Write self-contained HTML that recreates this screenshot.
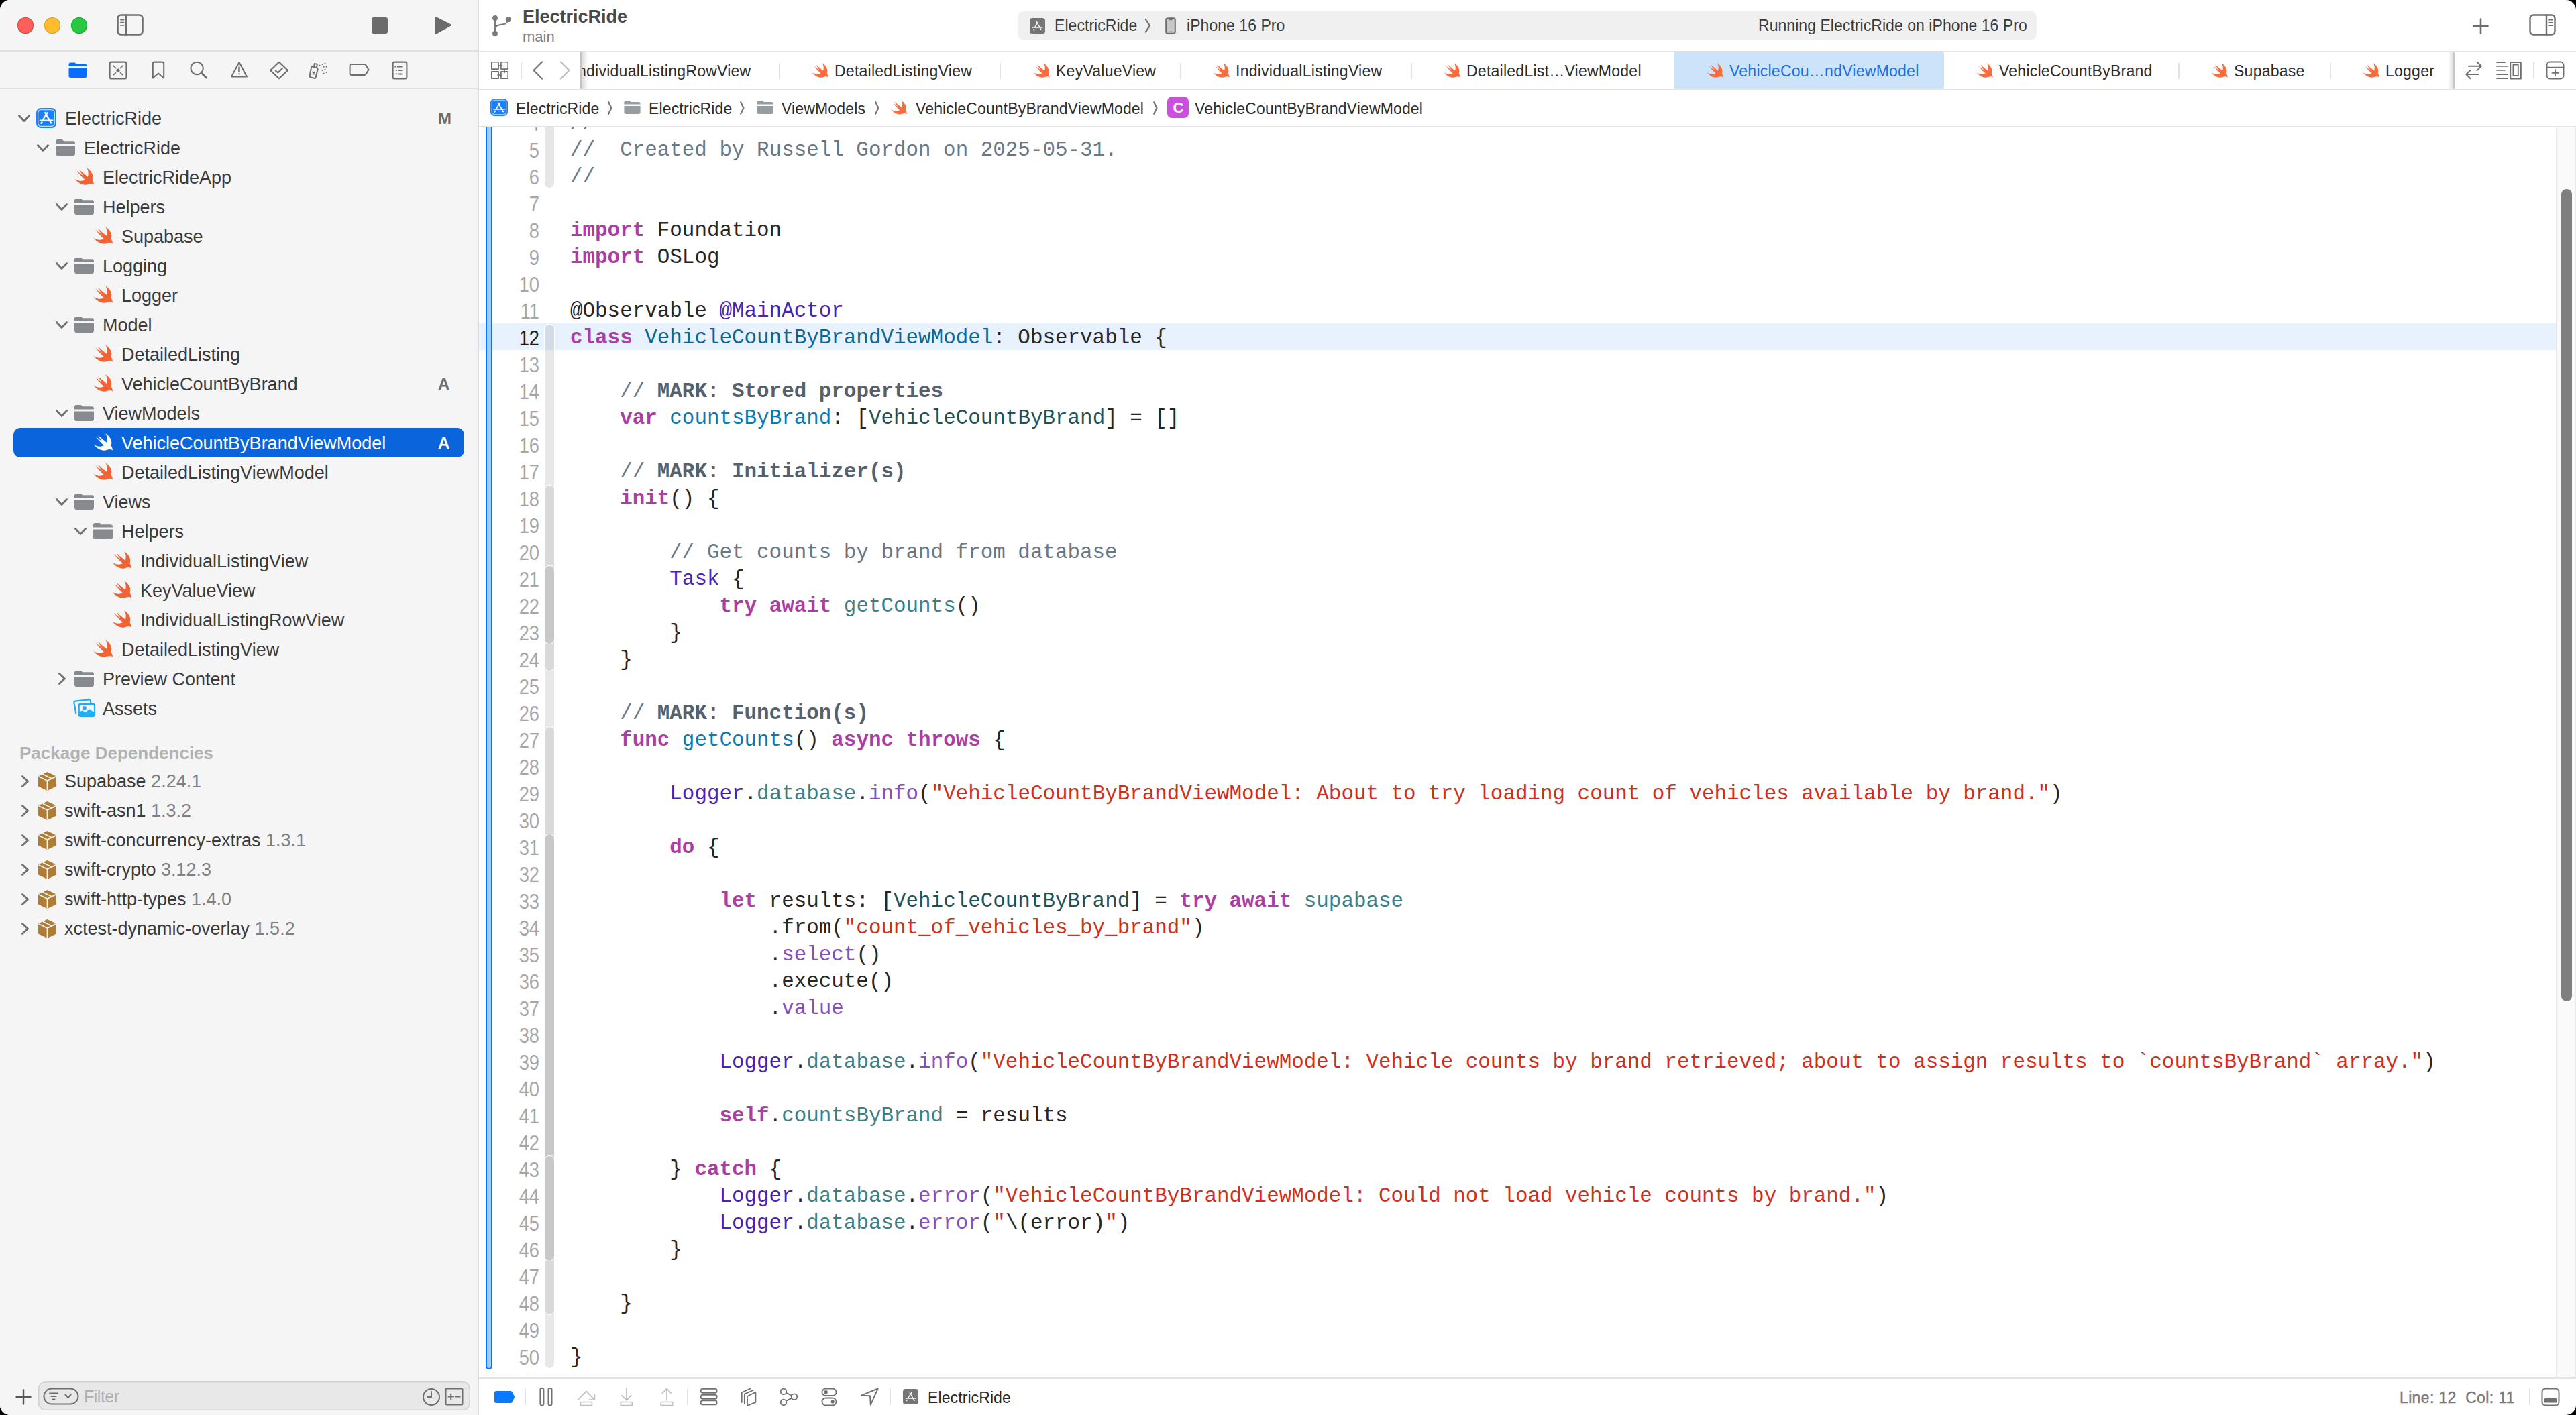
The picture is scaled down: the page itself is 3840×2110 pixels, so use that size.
<!DOCTYPE html><html><head><meta charset="utf-8"><style>
html,body{margin:0;padding:0;background:#000;width:3840px;height:2110px;overflow:hidden}
#win{position:absolute;left:0;top:0;width:3840px;height:2110px;border-radius:15px;overflow:hidden;background:#fff}
.code{position:absolute;left:850px;font-family:"Liberation Mono",monospace;font-size:30.9px;line-height:40px;white-space:pre;color:#262626}
.k{color:#ad3da4;font-weight:700}.c{color:#687887}.m{color:#55616d;font-weight:700}.s{color:#d12f1b}.td{color:#0c6691}.od{color:#0b79b4}.pc{color:#1f5257}.pf{color:#3c8087}.oc{color:#4a23b4}.of{color:#8450bf}.p{color:#262626}
.ln{position:absolute;left:703.5px;width:100px;text-align:right;font-family:"Liberation Sans",sans-serif;font-size:31px;line-height:40px;letter-spacing:0px;color:#a6a6a6;transform:scaleX(0.88);transform-origin:100% 50%}
</style></head><body><div id="win">
<div style="position:absolute;left:0px;top:0px;width:713px;height:2110px;background:#f5f5f5;"></div>
<div style="position:absolute;left:703px;top:0;width:10px;height:2110px;background:linear-gradient(to right,rgba(0,0,0,0),rgba(0,0,0,0.012))"></div>
<div style="position:absolute;left:713px;top:0px;width:1px;height:2110px;background:#dcdcdc;"></div>
<div style="position:absolute;left:0px;top:75px;width:712px;height:2px;background:#e0e0e0;"></div>
<div style="position:absolute;left:0px;top:131px;width:712px;height:2px;background:#e0e0e0;"></div>
<div style="position:absolute;left:26px;top:26px;width:24px;height:24px;border-radius:50%;background:#ff5f57;box-shadow:inset 0 0 0 1px #e14640"></div>
<div style="position:absolute;left:66px;top:26px;width:24px;height:24px;border-radius:50%;background:#febc2e;box-shadow:inset 0 0 0 1px #dfa023"></div>
<div style="position:absolute;left:106px;top:26px;width:24px;height:24px;border-radius:50%;background:#28c840;box-shadow:inset 0 0 0 1px #1aab29"></div>
<svg style="position:absolute;left:174px;top:21px" width="40" height="32" viewBox="0 0 40 32"><g stroke="#6e6e6e" stroke-width="2.6" fill="none" stroke-linecap="round" stroke-linejoin="round"><rect x="1.5" y="1.5" width="37" height="29" rx="5"/><path d="M14,1.5 V30.5"/><path d="M6,8.5 H10.5 M6,12.7 H10.5 M6,16.9 H10.5" stroke-width="1.8"/></g></svg>
<div style="position:absolute;left:554px;top:26px;width:24px;height:24px;background:#6b6b6b;border-radius:3px"></div>
<svg style="position:absolute;left:645px;top:23px" width="30" height="30" viewBox="0 0 30 30"><path d="M3,3.5 Q3,1 5.2,2.2 L27,13.2 Q29,14.5 27,15.8 L5.2,27.8 Q3,29 3,26.5 Z" fill="#6b6b6b"/></svg>
<svg style="position:absolute;left:102px;top:93px" width="28" height="24" viewBox="0 0 28 24"><path fill="#0a6cff" d="M3,0.5 H8.5 C10,0.5 10.6,1 11.4,2 L12,2.8 H25 C26.6,2.8 27.5,3.7 27.5,5.3 V6 H0.5 V3 C0.5,1.5 1.5,0.5 3,0.5 Z"/><path fill="#0a6cff" d="M0.5,8.3 H27.5 V20.5 C27.5,22.2 26.5,23 25,23 H3 C1.5,23 0.5,22.2 0.5,20.5 Z"/></svg>
<svg style="position:absolute;left:162px;top:91px" width="28" height="28" viewBox="0 0 28 28"><g stroke="#6e6e6e" stroke-width="2.1" fill="none" stroke-linecap="round" stroke-linejoin="round"><rect x="1.6" y="1.6" width="24.8" height="24.8" rx="2.5"/><path d="M7,7 L10.5,10.5 M21,7 L17.5,10.5 M7,21 L10.5,17.5 M21,21 L17.5,17.5" stroke-width="1.7"/><circle cx="14" cy="14" r="2.6" fill="#6e6e6e" stroke="none"/></g></svg>
<svg style="position:absolute;left:226px;top:91px" width="20" height="28" viewBox="0 0 20 28"><g stroke="#6e6e6e" stroke-width="2.1" fill="none" stroke-linecap="round" stroke-linejoin="round"><path d="M1.8,25.5 V4 Q1.8,1.6 4.2,1.6 H15.8 Q18.2,1.6 18.2,4 V25.5 L10,18.5 Z"/></g></svg>
<svg style="position:absolute;left:282px;top:91px" width="28" height="28" viewBox="0 0 28 28"><g stroke="#6e6e6e" stroke-width="2.1" fill="none" stroke-linecap="round" stroke-linejoin="round"><circle cx="11.6" cy="11" r="9.2"/><path d="M18.5,18 L25.5,25" stroke-width="2.8"/></g></svg>
<svg style="position:absolute;left:343px;top:91px" width="27" height="26" viewBox="0 0 27 26"><g stroke="#6e6e6e" stroke-width="2.0" fill="none" stroke-linecap="round" stroke-linejoin="round"><path d="M13.5,2 L25,23.5 H2 Z"/><path d="M13.5,9.5 V15.5" stroke-width="2.4"/><circle cx="13.5" cy="19.3" r="1.2" fill="#6e6e6e" stroke="none"/></g></svg>
<svg style="position:absolute;left:401px;top:91px" width="30" height="28" viewBox="0 0 30 28"><g stroke="#6e6e6e" stroke-width="2.1" fill="none" stroke-linecap="round" stroke-linejoin="round"><path d="M15,1.8 L28,14 L15,26.2 L2,14 Z"/><path d="M9.6,14.2 L13.3,17.6 L20,11" stroke-width="2.1"/></g></svg>
<svg style="position:absolute;left:460px;top:91px" width="33" height="28" viewBox="0 0 33 28"><g stroke="#6e6e6e" stroke-width="2.0" fill="none" stroke-linecap="round" stroke-linejoin="round"><path d="M5.5,8.2 L12.5,10.2 Q14,10.8 13.6,12.4 L10.6,24.8 Q10.2,26.3 8.7,25.9 L2.7,24.2 Q1.2,23.7 1.6,22.2 L4.1,9.6 Q4.5,8 5.5,8.2 Z"/><path d="M8,8.6 L8.9,3.9 L12.9,4.9 L11.9,9.6"/><path d="M5.8,16.5 L9.4,19.9 M9,16.3 L6.5,20.2" stroke-width="1.7"/><g fill="#6e6e6e" stroke="none"><circle cx="16.5" cy="6.8" r="1"/><circle cx="20.5" cy="5" r="1"/><circle cx="24.5" cy="3.4" r="1"/><circle cx="18.6" cy="10.5" r="1"/><circle cx="22.6" cy="8.8" r="1"/><circle cx="26.6" cy="8.8" r="1"/><circle cx="20.5" cy="14" r="1"/><circle cx="24.5" cy="12.8" r="1"/><circle cx="26.6" cy="17" r="1"/><circle cx="22.6" cy="18.6" r="1"/></g></g></svg>
<svg style="position:absolute;left:520px;top:94px" width="32" height="22" viewBox="0 0 32 22"><g stroke="#6e6e6e" stroke-width="2.1" fill="none" stroke-linecap="round" stroke-linejoin="round"><path d="M3.5,2 H23 Q24.5,2 25.4,3.3 L29.5,10 L25.4,16.7 Q24.5,18 23,18 H3.5 Q1.6,18 1.6,16 V4 Q1.6,2 3.5,2 Z"/></g></svg>
<svg style="position:absolute;left:584px;top:91px" width="24" height="28" viewBox="0 0 24 28"><g stroke="#6e6e6e" stroke-width="2.1" fill="none" stroke-linecap="round" stroke-linejoin="round"><rect x="1.6" y="1.6" width="20.8" height="24.8" rx="2.5"/><path d="M8.8,8.4 H15.8 M10.2,14 H15.8 M10.2,19.4 H15.8" stroke-width="2"/><g fill="#6e6e6e" stroke="none"><rect x="4.4" y="7.4" width="2" height="2"/><rect x="5.8" y="13" width="2" height="2"/><rect x="5.8" y="18.4" width="2" height="2"/></g></g></svg>
<div style="position:absolute;left:20px;top:638px;width:672px;height:44px;background:#0a64dc;border-radius:10px"></div>
<svg style="position:absolute;left:27px;top:171px" width="18" height="12" viewBox="0 0 18 12"><path d="M1.5,1.5 L9,9.5 L16.5,1.5" stroke="#707070" stroke-width="2.8" fill="none" stroke-linecap="round" stroke-linejoin="round"/></svg>
<svg style="position:absolute;left:54px;top:161px" width="30" height="30" viewBox="0 0 30 30"><rect x="0" y="0" width="30" height="30" rx="7" fill="#1a7ffa"/><rect x="2.6" y="2.6" width="24.8" height="24.8" rx="5" fill="none" stroke="#c2dcfd" stroke-width="1.3"/><g stroke="#fff" stroke-width="2.2" stroke-linecap="round" fill="none"><path d="M16.6,7.1 L10.4,17"/><path d="M13.2,7.1 L22.2,22.6"/><path d="M5.8,18.5 H24.5"/><path d="M7.4,22.8 L8.6,21.3"/></g></svg>
<div style="position:absolute;left:97px;top:164.14px;font-family:'Liberation Sans', sans-serif;font-size:27px;line-height:27px;color:#3b3b3b;font-weight:400;letter-spacing:0px;white-space:pre;">ElectricRide</div>
<div style="position:absolute;left:653px;top:164.68px;font-family:'Liberation Sans', sans-serif;font-size:24px;line-height:24px;color:#6e6e6e;font-weight:700;letter-spacing:0px;white-space:pre;">M</div>
<svg style="position:absolute;left:55px;top:215px" width="18" height="12" viewBox="0 0 18 12"><path d="M1.5,1.5 L9,9.5 L16.5,1.5" stroke="#707070" stroke-width="2.8" fill="none" stroke-linecap="round" stroke-linejoin="round"/></svg>
<svg style="position:absolute;left:83px;top:208px" width="29" height="24" viewBox="0 0 29 24"><path fill="#878b8f" d="M3,0 H8.5 C10,0 10.6,0.6 11.4,1.6 L12,2.3 H26 C27.7,2.3 29,3.6 29,5.3 V6.6 H0 V3 C0,1.3 1.3,0 3,0 Z"/><path fill="#878b8f" d="M0,9.6 H29 V21 C29,22.7 27.7,24 26,24 H3 C1.3,24 0,22.7 0,21 Z"/></svg>
<div style="position:absolute;left:125px;top:208.14px;font-family:'Liberation Sans', sans-serif;font-size:27px;line-height:27px;color:#3b3b3b;font-weight:400;letter-spacing:0px;white-space:pre;">ElectricRide</div>
<svg style="position:absolute;left:111px;top:250px" width="29" height="26" viewBox="0 0 29 26"><path fill="#f26333" d="M18.2,0.2 C23.5,3.5 27.6,8.5 27.3,14.4 C27.2,16 26.9,17.3 26.6,18.2 C27.9,20.2 28.9,23 28.9,25.8 C27.5,24 25,23.3 20.6,24.8 C15,27 7.5,25.5 0.2,16.6 C5.5,20.5 11.5,20.3 15.8,18.2 C11.5,14.5 6.5,9 3.4,4.3 C7.5,8.5 11,11 13.7,12.3 C11,9.5 8.5,6 7.2,2.9 C11.5,7 16,10.5 19.9,13.7 C21.2,9.5 21,4 18.2,0.2 Z"/></svg>
<div style="position:absolute;left:153px;top:252.14px;font-family:'Liberation Sans', sans-serif;font-size:27px;line-height:27px;color:#3b3b3b;font-weight:400;letter-spacing:0px;white-space:pre;">ElectricRideApp</div>
<svg style="position:absolute;left:83px;top:303px" width="18" height="12" viewBox="0 0 18 12"><path d="M1.5,1.5 L9,9.5 L16.5,1.5" stroke="#707070" stroke-width="2.8" fill="none" stroke-linecap="round" stroke-linejoin="round"/></svg>
<svg style="position:absolute;left:111px;top:296px" width="29" height="24" viewBox="0 0 29 24"><path fill="#878b8f" d="M3,0 H8.5 C10,0 10.6,0.6 11.4,1.6 L12,2.3 H26 C27.7,2.3 29,3.6 29,5.3 V6.6 H0 V3 C0,1.3 1.3,0 3,0 Z"/><path fill="#878b8f" d="M0,9.6 H29 V21 C29,22.7 27.7,24 26,24 H3 C1.3,24 0,22.7 0,21 Z"/></svg>
<div style="position:absolute;left:153px;top:296.14px;font-family:'Liberation Sans', sans-serif;font-size:27px;line-height:27px;color:#3b3b3b;font-weight:400;letter-spacing:0px;white-space:pre;">Helpers</div>
<svg style="position:absolute;left:139px;top:338px" width="29" height="26" viewBox="0 0 29 26"><path fill="#f26333" d="M18.2,0.2 C23.5,3.5 27.6,8.5 27.3,14.4 C27.2,16 26.9,17.3 26.6,18.2 C27.9,20.2 28.9,23 28.9,25.8 C27.5,24 25,23.3 20.6,24.8 C15,27 7.5,25.5 0.2,16.6 C5.5,20.5 11.5,20.3 15.8,18.2 C11.5,14.5 6.5,9 3.4,4.3 C7.5,8.5 11,11 13.7,12.3 C11,9.5 8.5,6 7.2,2.9 C11.5,7 16,10.5 19.9,13.7 C21.2,9.5 21,4 18.2,0.2 Z"/></svg>
<div style="position:absolute;left:181px;top:340.14px;font-family:'Liberation Sans', sans-serif;font-size:27px;line-height:27px;color:#3b3b3b;font-weight:400;letter-spacing:0px;white-space:pre;">Supabase</div>
<svg style="position:absolute;left:83px;top:391px" width="18" height="12" viewBox="0 0 18 12"><path d="M1.5,1.5 L9,9.5 L16.5,1.5" stroke="#707070" stroke-width="2.8" fill="none" stroke-linecap="round" stroke-linejoin="round"/></svg>
<svg style="position:absolute;left:111px;top:384px" width="29" height="24" viewBox="0 0 29 24"><path fill="#878b8f" d="M3,0 H8.5 C10,0 10.6,0.6 11.4,1.6 L12,2.3 H26 C27.7,2.3 29,3.6 29,5.3 V6.6 H0 V3 C0,1.3 1.3,0 3,0 Z"/><path fill="#878b8f" d="M0,9.6 H29 V21 C29,22.7 27.7,24 26,24 H3 C1.3,24 0,22.7 0,21 Z"/></svg>
<div style="position:absolute;left:153px;top:384.14px;font-family:'Liberation Sans', sans-serif;font-size:27px;line-height:27px;color:#3b3b3b;font-weight:400;letter-spacing:0px;white-space:pre;">Logging</div>
<svg style="position:absolute;left:139px;top:426px" width="29" height="26" viewBox="0 0 29 26"><path fill="#f26333" d="M18.2,0.2 C23.5,3.5 27.6,8.5 27.3,14.4 C27.2,16 26.9,17.3 26.6,18.2 C27.9,20.2 28.9,23 28.9,25.8 C27.5,24 25,23.3 20.6,24.8 C15,27 7.5,25.5 0.2,16.6 C5.5,20.5 11.5,20.3 15.8,18.2 C11.5,14.5 6.5,9 3.4,4.3 C7.5,8.5 11,11 13.7,12.3 C11,9.5 8.5,6 7.2,2.9 C11.5,7 16,10.5 19.9,13.7 C21.2,9.5 21,4 18.2,0.2 Z"/></svg>
<div style="position:absolute;left:181px;top:428.14px;font-family:'Liberation Sans', sans-serif;font-size:27px;line-height:27px;color:#3b3b3b;font-weight:400;letter-spacing:0px;white-space:pre;">Logger</div>
<svg style="position:absolute;left:83px;top:479px" width="18" height="12" viewBox="0 0 18 12"><path d="M1.5,1.5 L9,9.5 L16.5,1.5" stroke="#707070" stroke-width="2.8" fill="none" stroke-linecap="round" stroke-linejoin="round"/></svg>
<svg style="position:absolute;left:111px;top:472px" width="29" height="24" viewBox="0 0 29 24"><path fill="#878b8f" d="M3,0 H8.5 C10,0 10.6,0.6 11.4,1.6 L12,2.3 H26 C27.7,2.3 29,3.6 29,5.3 V6.6 H0 V3 C0,1.3 1.3,0 3,0 Z"/><path fill="#878b8f" d="M0,9.6 H29 V21 C29,22.7 27.7,24 26,24 H3 C1.3,24 0,22.7 0,21 Z"/></svg>
<div style="position:absolute;left:153px;top:472.14px;font-family:'Liberation Sans', sans-serif;font-size:27px;line-height:27px;color:#3b3b3b;font-weight:400;letter-spacing:0px;white-space:pre;">Model</div>
<svg style="position:absolute;left:139px;top:514px" width="29" height="26" viewBox="0 0 29 26"><path fill="#f26333" d="M18.2,0.2 C23.5,3.5 27.6,8.5 27.3,14.4 C27.2,16 26.9,17.3 26.6,18.2 C27.9,20.2 28.9,23 28.9,25.8 C27.5,24 25,23.3 20.6,24.8 C15,27 7.5,25.5 0.2,16.6 C5.5,20.5 11.5,20.3 15.8,18.2 C11.5,14.5 6.5,9 3.4,4.3 C7.5,8.5 11,11 13.7,12.3 C11,9.5 8.5,6 7.2,2.9 C11.5,7 16,10.5 19.9,13.7 C21.2,9.5 21,4 18.2,0.2 Z"/></svg>
<div style="position:absolute;left:181px;top:516.14px;font-family:'Liberation Sans', sans-serif;font-size:27px;line-height:27px;color:#3b3b3b;font-weight:400;letter-spacing:0px;white-space:pre;">DetailedListing</div>
<svg style="position:absolute;left:139px;top:558px" width="29" height="26" viewBox="0 0 29 26"><path fill="#f26333" d="M18.2,0.2 C23.5,3.5 27.6,8.5 27.3,14.4 C27.2,16 26.9,17.3 26.6,18.2 C27.9,20.2 28.9,23 28.9,25.8 C27.5,24 25,23.3 20.6,24.8 C15,27 7.5,25.5 0.2,16.6 C5.5,20.5 11.5,20.3 15.8,18.2 C11.5,14.5 6.5,9 3.4,4.3 C7.5,8.5 11,11 13.7,12.3 C11,9.5 8.5,6 7.2,2.9 C11.5,7 16,10.5 19.9,13.7 C21.2,9.5 21,4 18.2,0.2 Z"/></svg>
<div style="position:absolute;left:181px;top:560.14px;font-family:'Liberation Sans', sans-serif;font-size:27px;line-height:27px;color:#3b3b3b;font-weight:400;letter-spacing:0px;white-space:pre;">VehicleCountByBrand</div>
<div style="position:absolute;left:653px;top:560.68px;font-family:'Liberation Sans', sans-serif;font-size:24px;line-height:24px;color:#6e6e6e;font-weight:700;letter-spacing:0px;white-space:pre;">A</div>
<svg style="position:absolute;left:83px;top:611px" width="18" height="12" viewBox="0 0 18 12"><path d="M1.5,1.5 L9,9.5 L16.5,1.5" stroke="#707070" stroke-width="2.8" fill="none" stroke-linecap="round" stroke-linejoin="round"/></svg>
<svg style="position:absolute;left:111px;top:604px" width="29" height="24" viewBox="0 0 29 24"><path fill="#878b8f" d="M3,0 H8.5 C10,0 10.6,0.6 11.4,1.6 L12,2.3 H26 C27.7,2.3 29,3.6 29,5.3 V6.6 H0 V3 C0,1.3 1.3,0 3,0 Z"/><path fill="#878b8f" d="M0,9.6 H29 V21 C29,22.7 27.7,24 26,24 H3 C1.3,24 0,22.7 0,21 Z"/></svg>
<div style="position:absolute;left:153px;top:604.14px;font-family:'Liberation Sans', sans-serif;font-size:27px;line-height:27px;color:#3b3b3b;font-weight:400;letter-spacing:0px;white-space:pre;">ViewModels</div>
<svg style="position:absolute;left:139px;top:646px" width="29" height="26" viewBox="0 0 29 26"><path fill="#ffffff" d="M18.2,0.2 C23.5,3.5 27.6,8.5 27.3,14.4 C27.2,16 26.9,17.3 26.6,18.2 C27.9,20.2 28.9,23 28.9,25.8 C27.5,24 25,23.3 20.6,24.8 C15,27 7.5,25.5 0.2,16.6 C5.5,20.5 11.5,20.3 15.8,18.2 C11.5,14.5 6.5,9 3.4,4.3 C7.5,8.5 11,11 13.7,12.3 C11,9.5 8.5,6 7.2,2.9 C11.5,7 16,10.5 19.9,13.7 C21.2,9.5 21,4 18.2,0.2 Z"/></svg>
<div style="position:absolute;left:181px;top:648.14px;font-family:'Liberation Sans', sans-serif;font-size:27px;line-height:27px;color:#ffffff;font-weight:400;letter-spacing:0px;white-space:pre;">VehicleCountByBrandViewModel</div>
<div style="position:absolute;left:653px;top:648.68px;font-family:'Liberation Sans', sans-serif;font-size:24px;line-height:24px;color:#ffffff;font-weight:700;letter-spacing:0px;white-space:pre;">A</div>
<svg style="position:absolute;left:139px;top:690px" width="29" height="26" viewBox="0 0 29 26"><path fill="#f26333" d="M18.2,0.2 C23.5,3.5 27.6,8.5 27.3,14.4 C27.2,16 26.9,17.3 26.6,18.2 C27.9,20.2 28.9,23 28.9,25.8 C27.5,24 25,23.3 20.6,24.8 C15,27 7.5,25.5 0.2,16.6 C5.5,20.5 11.5,20.3 15.8,18.2 C11.5,14.5 6.5,9 3.4,4.3 C7.5,8.5 11,11 13.7,12.3 C11,9.5 8.5,6 7.2,2.9 C11.5,7 16,10.5 19.9,13.7 C21.2,9.5 21,4 18.2,0.2 Z"/></svg>
<div style="position:absolute;left:181px;top:692.14px;font-family:'Liberation Sans', sans-serif;font-size:27px;line-height:27px;color:#3b3b3b;font-weight:400;letter-spacing:0px;white-space:pre;">DetailedListingViewModel</div>
<svg style="position:absolute;left:83px;top:743px" width="18" height="12" viewBox="0 0 18 12"><path d="M1.5,1.5 L9,9.5 L16.5,1.5" stroke="#707070" stroke-width="2.8" fill="none" stroke-linecap="round" stroke-linejoin="round"/></svg>
<svg style="position:absolute;left:111px;top:736px" width="29" height="24" viewBox="0 0 29 24"><path fill="#878b8f" d="M3,0 H8.5 C10,0 10.6,0.6 11.4,1.6 L12,2.3 H26 C27.7,2.3 29,3.6 29,5.3 V6.6 H0 V3 C0,1.3 1.3,0 3,0 Z"/><path fill="#878b8f" d="M0,9.6 H29 V21 C29,22.7 27.7,24 26,24 H3 C1.3,24 0,22.7 0,21 Z"/></svg>
<div style="position:absolute;left:153px;top:736.14px;font-family:'Liberation Sans', sans-serif;font-size:27px;line-height:27px;color:#3b3b3b;font-weight:400;letter-spacing:0px;white-space:pre;">Views</div>
<svg style="position:absolute;left:111px;top:787px" width="18" height="12" viewBox="0 0 18 12"><path d="M1.5,1.5 L9,9.5 L16.5,1.5" stroke="#707070" stroke-width="2.8" fill="none" stroke-linecap="round" stroke-linejoin="round"/></svg>
<svg style="position:absolute;left:139px;top:780px" width="29" height="24" viewBox="0 0 29 24"><path fill="#878b8f" d="M3,0 H8.5 C10,0 10.6,0.6 11.4,1.6 L12,2.3 H26 C27.7,2.3 29,3.6 29,5.3 V6.6 H0 V3 C0,1.3 1.3,0 3,0 Z"/><path fill="#878b8f" d="M0,9.6 H29 V21 C29,22.7 27.7,24 26,24 H3 C1.3,24 0,22.7 0,21 Z"/></svg>
<div style="position:absolute;left:181px;top:780.14px;font-family:'Liberation Sans', sans-serif;font-size:27px;line-height:27px;color:#3b3b3b;font-weight:400;letter-spacing:0px;white-space:pre;">Helpers</div>
<svg style="position:absolute;left:167px;top:822px" width="29" height="26" viewBox="0 0 29 26"><path fill="#f26333" d="M18.2,0.2 C23.5,3.5 27.6,8.5 27.3,14.4 C27.2,16 26.9,17.3 26.6,18.2 C27.9,20.2 28.9,23 28.9,25.8 C27.5,24 25,23.3 20.6,24.8 C15,27 7.5,25.5 0.2,16.6 C5.5,20.5 11.5,20.3 15.8,18.2 C11.5,14.5 6.5,9 3.4,4.3 C7.5,8.5 11,11 13.7,12.3 C11,9.5 8.5,6 7.2,2.9 C11.5,7 16,10.5 19.9,13.7 C21.2,9.5 21,4 18.2,0.2 Z"/></svg>
<div style="position:absolute;left:209px;top:824.14px;font-family:'Liberation Sans', sans-serif;font-size:27px;line-height:27px;color:#3b3b3b;font-weight:400;letter-spacing:0px;white-space:pre;">IndividualListingView</div>
<svg style="position:absolute;left:167px;top:866px" width="29" height="26" viewBox="0 0 29 26"><path fill="#f26333" d="M18.2,0.2 C23.5,3.5 27.6,8.5 27.3,14.4 C27.2,16 26.9,17.3 26.6,18.2 C27.9,20.2 28.9,23 28.9,25.8 C27.5,24 25,23.3 20.6,24.8 C15,27 7.5,25.5 0.2,16.6 C5.5,20.5 11.5,20.3 15.8,18.2 C11.5,14.5 6.5,9 3.4,4.3 C7.5,8.5 11,11 13.7,12.3 C11,9.5 8.5,6 7.2,2.9 C11.5,7 16,10.5 19.9,13.7 C21.2,9.5 21,4 18.2,0.2 Z"/></svg>
<div style="position:absolute;left:209px;top:868.14px;font-family:'Liberation Sans', sans-serif;font-size:27px;line-height:27px;color:#3b3b3b;font-weight:400;letter-spacing:0px;white-space:pre;">KeyValueView</div>
<svg style="position:absolute;left:167px;top:910px" width="29" height="26" viewBox="0 0 29 26"><path fill="#f26333" d="M18.2,0.2 C23.5,3.5 27.6,8.5 27.3,14.4 C27.2,16 26.9,17.3 26.6,18.2 C27.9,20.2 28.9,23 28.9,25.8 C27.5,24 25,23.3 20.6,24.8 C15,27 7.5,25.5 0.2,16.6 C5.5,20.5 11.5,20.3 15.8,18.2 C11.5,14.5 6.5,9 3.4,4.3 C7.5,8.5 11,11 13.7,12.3 C11,9.5 8.5,6 7.2,2.9 C11.5,7 16,10.5 19.9,13.7 C21.2,9.5 21,4 18.2,0.2 Z"/></svg>
<div style="position:absolute;left:209px;top:912.14px;font-family:'Liberation Sans', sans-serif;font-size:27px;line-height:27px;color:#3b3b3b;font-weight:400;letter-spacing:0px;white-space:pre;">IndividualListingRowView</div>
<svg style="position:absolute;left:139px;top:954px" width="29" height="26" viewBox="0 0 29 26"><path fill="#f26333" d="M18.2,0.2 C23.5,3.5 27.6,8.5 27.3,14.4 C27.2,16 26.9,17.3 26.6,18.2 C27.9,20.2 28.9,23 28.9,25.8 C27.5,24 25,23.3 20.6,24.8 C15,27 7.5,25.5 0.2,16.6 C5.5,20.5 11.5,20.3 15.8,18.2 C11.5,14.5 6.5,9 3.4,4.3 C7.5,8.5 11,11 13.7,12.3 C11,9.5 8.5,6 7.2,2.9 C11.5,7 16,10.5 19.9,13.7 C21.2,9.5 21,4 18.2,0.2 Z"/></svg>
<div style="position:absolute;left:181px;top:956.14px;font-family:'Liberation Sans', sans-serif;font-size:27px;line-height:27px;color:#3b3b3b;font-weight:400;letter-spacing:0px;white-space:pre;">DetailedListingView</div>
<svg style="position:absolute;left:87px;top:1003px" width="12" height="18" viewBox="0 0 12 18"><path d="M1.5,1.5 L9.5,9 L1.5,16.5" stroke="#707070" stroke-width="2.8" fill="none" stroke-linecap="round" stroke-linejoin="round"/></svg>
<svg style="position:absolute;left:111px;top:1000px" width="29" height="24" viewBox="0 0 29 24"><path fill="#878b8f" d="M3,0 H8.5 C10,0 10.6,0.6 11.4,1.6 L12,2.3 H26 C27.7,2.3 29,3.6 29,5.3 V6.6 H0 V3 C0,1.3 1.3,0 3,0 Z"/><path fill="#878b8f" d="M0,9.6 H29 V21 C29,22.7 27.7,24 26,24 H3 C1.3,24 0,22.7 0,21 Z"/></svg>
<div style="position:absolute;left:153px;top:1000.14px;font-family:'Liberation Sans', sans-serif;font-size:27px;line-height:27px;color:#3b3b3b;font-weight:400;letter-spacing:0px;white-space:pre;">Preview Content</div>
<svg style="position:absolute;left:108px;top:1041px" width="36" height="30" viewBox="0 0 36 30"><path d="M5.3,22.8 L2.4,7 Q2.1,5 4.1,4.6 L24.6,2.3 Q26.4,2.1 26.8,4 L27.4,8" stroke="#1eaef5" stroke-width="2.3" fill="none" stroke-linejoin="round"/><rect x="9.65" y="8.75" width="23.4" height="18" rx="2.6" fill="#f5f5f5" stroke="#1eaef5" stroke-width="2.3"/><path d="M9.65,20.5 L15.1,18.6 L18.8,21.4 L25.3,16.4 L33,21.4 V24.2 Q33,26.75 30.4,26.75 H12.2 Q9.65,26.75 9.65,24.2 Z" fill="#1eaef5"/><circle cx="17.9" cy="14.9" r="2.9" fill="#1eaef5"/></svg>
<div style="position:absolute;left:153px;top:1044.14px;font-family:'Liberation Sans', sans-serif;font-size:27px;line-height:27px;color:#3b3b3b;font-weight:400;letter-spacing:0px;white-space:pre;">Assets</div>
<div style="position:absolute;left:29px;top:1110.49px;font-family:'Liberation Sans', sans-serif;font-size:26px;line-height:26px;color:#b2b2b2;font-weight:700;letter-spacing:0px;white-space:pre;">Package Dependencies</div>
<svg style="position:absolute;left:32px;top:1156px" width="12" height="18" viewBox="0 0 12 18"><path d="M1.5,1.5 L9.5,9 L1.5,16.5" stroke="#707070" stroke-width="2.8" fill="none" stroke-linecap="round" stroke-linejoin="round"/></svg>
<svg style="position:absolute;left:57px;top:1151px" width="27" height="28" viewBox="0 0 27 28"><path fill="#b07c34" d="M13.5,0 L27,6.5 V21.5 L13.5,28 L0,21.5 V6.5 Z"/><path d="M0.5,6.8 L13.5,13 L26.5,6.8 M13.5,13 V27.5" stroke="#f5f5f5" stroke-width="1.8" fill="none"/><path d="M6.5,3.3 L20,9.8" stroke="#f5f5f5" stroke-width="1.8" fill="none"/></svg>
<div style="position:absolute;left:96px;top:1148px;font-family:'Liberation Sans', sans-serif;font-size:27px;line-height:34px;white-space:pre;color:#3b3b3b">Supabase <span style="color:#808080">2.24.1</span></div>
<svg style="position:absolute;left:32px;top:1200px" width="12" height="18" viewBox="0 0 12 18"><path d="M1.5,1.5 L9.5,9 L1.5,16.5" stroke="#707070" stroke-width="2.8" fill="none" stroke-linecap="round" stroke-linejoin="round"/></svg>
<svg style="position:absolute;left:57px;top:1195px" width="27" height="28" viewBox="0 0 27 28"><path fill="#b07c34" d="M13.5,0 L27,6.5 V21.5 L13.5,28 L0,21.5 V6.5 Z"/><path d="M0.5,6.8 L13.5,13 L26.5,6.8 M13.5,13 V27.5" stroke="#f5f5f5" stroke-width="1.8" fill="none"/><path d="M6.5,3.3 L20,9.8" stroke="#f5f5f5" stroke-width="1.8" fill="none"/></svg>
<div style="position:absolute;left:96px;top:1192px;font-family:'Liberation Sans', sans-serif;font-size:27px;line-height:34px;white-space:pre;color:#3b3b3b">swift-asn1 <span style="color:#808080">1.3.2</span></div>
<svg style="position:absolute;left:32px;top:1244px" width="12" height="18" viewBox="0 0 12 18"><path d="M1.5,1.5 L9.5,9 L1.5,16.5" stroke="#707070" stroke-width="2.8" fill="none" stroke-linecap="round" stroke-linejoin="round"/></svg>
<svg style="position:absolute;left:57px;top:1239px" width="27" height="28" viewBox="0 0 27 28"><path fill="#b07c34" d="M13.5,0 L27,6.5 V21.5 L13.5,28 L0,21.5 V6.5 Z"/><path d="M0.5,6.8 L13.5,13 L26.5,6.8 M13.5,13 V27.5" stroke="#f5f5f5" stroke-width="1.8" fill="none"/><path d="M6.5,3.3 L20,9.8" stroke="#f5f5f5" stroke-width="1.8" fill="none"/></svg>
<div style="position:absolute;left:96px;top:1236px;font-family:'Liberation Sans', sans-serif;font-size:27px;line-height:34px;white-space:pre;color:#3b3b3b">swift-concurrency-extras <span style="color:#808080">1.3.1</span></div>
<svg style="position:absolute;left:32px;top:1288px" width="12" height="18" viewBox="0 0 12 18"><path d="M1.5,1.5 L9.5,9 L1.5,16.5" stroke="#707070" stroke-width="2.8" fill="none" stroke-linecap="round" stroke-linejoin="round"/></svg>
<svg style="position:absolute;left:57px;top:1283px" width="27" height="28" viewBox="0 0 27 28"><path fill="#b07c34" d="M13.5,0 L27,6.5 V21.5 L13.5,28 L0,21.5 V6.5 Z"/><path d="M0.5,6.8 L13.5,13 L26.5,6.8 M13.5,13 V27.5" stroke="#f5f5f5" stroke-width="1.8" fill="none"/><path d="M6.5,3.3 L20,9.8" stroke="#f5f5f5" stroke-width="1.8" fill="none"/></svg>
<div style="position:absolute;left:96px;top:1280px;font-family:'Liberation Sans', sans-serif;font-size:27px;line-height:34px;white-space:pre;color:#3b3b3b">swift-crypto <span style="color:#808080">3.12.3</span></div>
<svg style="position:absolute;left:32px;top:1332px" width="12" height="18" viewBox="0 0 12 18"><path d="M1.5,1.5 L9.5,9 L1.5,16.5" stroke="#707070" stroke-width="2.8" fill="none" stroke-linecap="round" stroke-linejoin="round"/></svg>
<svg style="position:absolute;left:57px;top:1327px" width="27" height="28" viewBox="0 0 27 28"><path fill="#b07c34" d="M13.5,0 L27,6.5 V21.5 L13.5,28 L0,21.5 V6.5 Z"/><path d="M0.5,6.8 L13.5,13 L26.5,6.8 M13.5,13 V27.5" stroke="#f5f5f5" stroke-width="1.8" fill="none"/><path d="M6.5,3.3 L20,9.8" stroke="#f5f5f5" stroke-width="1.8" fill="none"/></svg>
<div style="position:absolute;left:96px;top:1324px;font-family:'Liberation Sans', sans-serif;font-size:27px;line-height:34px;white-space:pre;color:#3b3b3b">swift-http-types <span style="color:#808080">1.4.0</span></div>
<svg style="position:absolute;left:32px;top:1376px" width="12" height="18" viewBox="0 0 12 18"><path d="M1.5,1.5 L9.5,9 L1.5,16.5" stroke="#707070" stroke-width="2.8" fill="none" stroke-linecap="round" stroke-linejoin="round"/></svg>
<svg style="position:absolute;left:57px;top:1371px" width="27" height="28" viewBox="0 0 27 28"><path fill="#b07c34" d="M13.5,0 L27,6.5 V21.5 L13.5,28 L0,21.5 V6.5 Z"/><path d="M0.5,6.8 L13.5,13 L26.5,6.8 M13.5,13 V27.5" stroke="#f5f5f5" stroke-width="1.8" fill="none"/><path d="M6.5,3.3 L20,9.8" stroke="#f5f5f5" stroke-width="1.8" fill="none"/></svg>
<div style="position:absolute;left:96px;top:1368px;font-family:'Liberation Sans', sans-serif;font-size:27px;line-height:34px;white-space:pre;color:#3b3b3b">xctest-dynamic-overlay <span style="color:#808080">1.5.2</span></div>
<svg style="position:absolute;left:22px;top:2070px" width="26" height="26" viewBox="0 0 26 26"><g stroke="#555" stroke-width="2.4" fill="none" stroke-linecap="round" stroke-linejoin="round"><path d="M13,2.5 V23.5 M2.5,13 H23.5"/></g></svg>
<div style="position:absolute;left:57px;top:2060px;width:644px;height:43px;border-radius:11px;background:#e8e8e8;box-shadow:inset 0 0 0 1.5px #d2d2d2"></div>
<svg style="position:absolute;left:64px;top:2069px" width="54" height="26" viewBox="0 0 54 26"><g stroke="#6e6e6e" stroke-width="2" fill="none" stroke-linecap="round" stroke-linejoin="round"><rect x="1.5" y="1.5" width="51" height="23" rx="11.5"/><path d="M10,8.5 H22 M12.5,13 H19.5 M14.5,17.5 H17.5" stroke-width="2"/><path d="M33.5,10.8 L37.5,14.8 L41.5,10.8" stroke-width="2.2"/></g></svg>
<div style="position:absolute;left:125px;top:2069.84px;font-family:'Liberation Sans', sans-serif;font-size:25px;line-height:25px;color:#b0b0b0;font-weight:400;letter-spacing:-0.5px;white-space:pre;">Filter</div>
<svg style="position:absolute;left:629px;top:2069px" width="28" height="28" viewBox="0 0 28 28"><g stroke="#6e6e6e" stroke-width="2" fill="none" stroke-linecap="round" stroke-linejoin="round"><circle cx="14" cy="14" r="12"/><path d="M14,6 V14 H8.5" stroke-width="2"/></g></svg>
<svg style="position:absolute;left:663px;top:2069px" width="28" height="27" viewBox="0 0 28 27"><g stroke="#6e6e6e" stroke-width="2" fill="none" stroke-linecap="round" stroke-linejoin="round"><rect x="1.5" y="1.5" width="25" height="24" rx="1.5"/><path d="M5.5,13.5 H13 M9.2,9.7 V17.3 M16,13.5 H22.5" stroke-width="2"/></g></svg>
<div style="position:absolute;left:714px;top:76px;width:3126px;height:2px;background:#e3e3e3;"></div>
<div style="position:absolute;left:714px;top:132px;width:3126px;height:2px;background:#e3e3e3;"></div>
<div style="position:absolute;left:714px;top:188px;width:3126px;height:2px;background:#e3e3e3;"></div>
<div style="position:absolute;left:714px;top:2054px;width:3126px;height:2px;background:#e3e3e3;"></div>
<svg style="position:absolute;left:730px;top:20px" width="34" height="38" viewBox="0 0 34 38"><g fill="#7a7a7a"><circle cx="8" cy="7" r="3.9"/><circle cx="27.7" cy="9.2" r="3.9"/><circle cx="8" cy="30" r="3.9"/></g><path d="M8,7 V30 M8,21.5 Q9.5,17.5 17,16.8 Q25,16 26,12.5 L27.2,9.5" stroke="#7a7a7a" stroke-width="2.2" fill="none"/></svg>
<div style="position:absolute;left:779px;top:12.14px;font-family:'Liberation Sans', sans-serif;font-size:27px;line-height:27px;color:#4a4a4a;font-weight:700;letter-spacing:0px;white-space:pre;">ElectricRide</div>
<div style="position:absolute;left:779px;top:44.38px;font-family:'Liberation Sans', sans-serif;font-size:22px;line-height:22px;color:#808080;font-weight:400;letter-spacing:0px;white-space:pre;">main</div>
<div style="position:absolute;left:1517px;top:16px;width:1519px;height:44px;border-radius:10px;background:#f0f0f0"></div>
<svg style="position:absolute;left:1535px;top:27px" width="23" height="23" viewBox="0 0 30 30"><rect x="0" y="0" width="30" height="30" rx="5" fill="#767676"/><g stroke="#fff" stroke-width="1.686666666666667" stroke-linecap="round" fill="none"><path d="M16.6,7.1 L10.4,17"/><path d="M13.2,7.1 L22.2,22.6"/><path d="M5.8,18.5 H24.5"/><path d="M7.4,22.8 L8.6,21.3"/></g></svg>
<div style="position:absolute;left:1572px;top:26.53px;font-family:'Liberation Sans', sans-serif;font-size:23px;line-height:23px;color:#3a3a3a;font-weight:400;letter-spacing:0.05px;white-space:pre;">ElectricRide</div>
<svg style="position:absolute;left:1704px;top:27px" width="14" height="22" viewBox="0 0 14 22"><g stroke="#707070" stroke-width="2.2" fill="none" stroke-linecap="round" stroke-linejoin="round"><path d="M3.8,2 L10,11.3 L3.8,20.6"/></g></svg>
<svg style="position:absolute;left:1737px;top:26px" width="16" height="25" viewBox="0 0 16 25"><g stroke="#6e6e6e" stroke-width="2" fill="none" stroke-linecap="round" stroke-linejoin="round"><rect x="1.2" y="1.2" width="13.6" height="22.6" rx="2.5" fill="#c8c8c8"/><path d="M6,3.6 H10 M6,21.4 H10" stroke-width="1.2"/></g></svg>
<div style="position:absolute;left:1769px;top:26.53px;font-family:'Liberation Sans', sans-serif;font-size:23px;line-height:23px;color:#3a3a3a;font-weight:400;letter-spacing:0.05px;white-space:pre;">iPhone 16 Pro</div>
<div style="position:absolute;left:2621px;top:26.53px;font-family:'Liberation Sans', sans-serif;font-size:23px;line-height:23px;color:#3a3a3a;font-weight:400;letter-spacing:0.05px;white-space:pre;">Running ElectricRide on iPhone 16 Pro</div>
<svg style="position:absolute;left:3686px;top:27px" width="24" height="24" viewBox="0 0 24 24"><g stroke="#6e6e6e" stroke-width="2.6" fill="none" stroke-linecap="round" stroke-linejoin="round"><path d="M12,1.5 V22.5 M1.5,12 H22.5"/></g></svg>
<svg style="position:absolute;left:3770px;top:21px" width="40" height="32" viewBox="0 0 40 32"><g stroke="#6e6e6e" stroke-width="2.4" fill="none" stroke-linecap="round" stroke-linejoin="round"><rect x="1.5" y="1.5" width="37" height="29" rx="5"/><path d="M26,1.5 V30.5"/><path d="M30,8.5 H35 M30,12.8 H35 M30,17.1 H35" stroke-width="1.8"/></g></svg>
<svg style="position:absolute;left:731px;top:91px" width="28" height="28" viewBox="0 0 28 28"><g stroke="#707070" stroke-width="1.6" fill="none" stroke-linecap="round" stroke-linejoin="round"><rect x="1.8" y="1.8" width="10.3" height="10.3"/><rect x="15.9" y="1.8" width="10.3" height="10.3"/><rect x="1.8" y="15.9" width="10.3" height="10.3"/><rect x="15.9" y="15.9" width="10.3" height="10.3"/><path d="M12.1,7 H17.7 M21,12.1 V17.5 M10.8,21 H15.9"/></g></svg>
<div style="position:absolute;left:776px;top:93px;width:2px;height:24px;background:#e2e2e2;"></div>
<svg style="position:absolute;left:792px;top:90px" width="20" height="30" viewBox="0 0 20 30"><g stroke="#777" stroke-width="2.3" fill="none" stroke-linecap="round" stroke-linejoin="round"><path d="M16,2.5 L3.5,15 L16,27.5"/></g></svg>
<svg style="position:absolute;left:832px;top:90px" width="20" height="30" viewBox="0 0 20 30"><g stroke="#bdbdbd" stroke-width="2.3" fill="none" stroke-linecap="round" stroke-linejoin="round"><path d="M4,2.5 L16.5,15 L4,27.5"/></g></svg>
<div style="position:absolute;left:867px;top:78px;width:2792px;height:54px;overflow:hidden">
<div style="position:absolute;left:1629px;top:0px;width:402px;height:54px;background:#cde3fa"></div>
<div style="position:absolute;left:-6px;top:16.53px;font-family:'Liberation Sans', sans-serif;font-size:23px;line-height:23px;color:#2b2b2b;font-weight:400;letter-spacing:0.25px;white-space:pre;">ndividualListingRowView</div>
<div style="position:absolute;left:294px;top:16px;width:2px;height:24px;background:#e2e2e2;"></div>
<svg style="position:absolute;left:343px;top:16px" width="25" height="22" viewBox="0 0 29 26"><path fill="#fa6b3d" d="M18.2,0.2 C23.5,3.5 27.6,8.5 27.3,14.4 C27.2,16 26.9,17.3 26.6,18.2 C27.9,20.2 28.9,23 28.9,25.8 C27.5,24 25,23.3 20.6,24.8 C15,27 7.5,25.5 0.2,16.6 C5.5,20.5 11.5,20.3 15.8,18.2 C11.5,14.5 6.5,9 3.4,4.3 C7.5,8.5 11,11 13.7,12.3 C11,9.5 8.5,6 7.2,2.9 C11.5,7 16,10.5 19.9,13.7 C21.2,9.5 21,4 18.2,0.2 Z"/></svg>
<div style="position:absolute;left:377px;top:16.53px;font-family:'Liberation Sans', sans-serif;font-size:23px;line-height:23px;color:#2b2b2b;font-weight:400;letter-spacing:0.25px;white-space:pre;">DetailedListingView</div>
<div style="position:absolute;left:623px;top:16px;width:2px;height:24px;background:#e2e2e2;"></div>
<svg style="position:absolute;left:673px;top:16px" width="25" height="22" viewBox="0 0 29 26"><path fill="#fa6b3d" d="M18.2,0.2 C23.5,3.5 27.6,8.5 27.3,14.4 C27.2,16 26.9,17.3 26.6,18.2 C27.9,20.2 28.9,23 28.9,25.8 C27.5,24 25,23.3 20.6,24.8 C15,27 7.5,25.5 0.2,16.6 C5.5,20.5 11.5,20.3 15.8,18.2 C11.5,14.5 6.5,9 3.4,4.3 C7.5,8.5 11,11 13.7,12.3 C11,9.5 8.5,6 7.2,2.9 C11.5,7 16,10.5 19.9,13.7 C21.2,9.5 21,4 18.2,0.2 Z"/></svg>
<div style="position:absolute;left:707px;top:16.53px;font-family:'Liberation Sans', sans-serif;font-size:23px;line-height:23px;color:#2b2b2b;font-weight:400;letter-spacing:0.25px;white-space:pre;">KeyValueView</div>
<div style="position:absolute;left:891.5px;top:16px;width:2px;height:24px;background:#e2e2e2;"></div>
<svg style="position:absolute;left:941px;top:16px" width="25" height="22" viewBox="0 0 29 26"><path fill="#fa6b3d" d="M18.2,0.2 C23.5,3.5 27.6,8.5 27.3,14.4 C27.2,16 26.9,17.3 26.6,18.2 C27.9,20.2 28.9,23 28.9,25.8 C27.5,24 25,23.3 20.6,24.8 C15,27 7.5,25.5 0.2,16.6 C5.5,20.5 11.5,20.3 15.8,18.2 C11.5,14.5 6.5,9 3.4,4.3 C7.5,8.5 11,11 13.7,12.3 C11,9.5 8.5,6 7.2,2.9 C11.5,7 16,10.5 19.9,13.7 C21.2,9.5 21,4 18.2,0.2 Z"/></svg>
<div style="position:absolute;left:975px;top:16.53px;font-family:'Liberation Sans', sans-serif;font-size:23px;line-height:23px;color:#2b2b2b;font-weight:400;letter-spacing:0.25px;white-space:pre;">IndividualListingView</div>
<div style="position:absolute;left:1236px;top:16px;width:2px;height:24px;background:#e2e2e2;"></div>
<svg style="position:absolute;left:1285px;top:16px" width="25" height="22" viewBox="0 0 29 26"><path fill="#fa6b3d" d="M18.2,0.2 C23.5,3.5 27.6,8.5 27.3,14.4 C27.2,16 26.9,17.3 26.6,18.2 C27.9,20.2 28.9,23 28.9,25.8 C27.5,24 25,23.3 20.6,24.8 C15,27 7.5,25.5 0.2,16.6 C5.5,20.5 11.5,20.3 15.8,18.2 C11.5,14.5 6.5,9 3.4,4.3 C7.5,8.5 11,11 13.7,12.3 C11,9.5 8.5,6 7.2,2.9 C11.5,7 16,10.5 19.9,13.7 C21.2,9.5 21,4 18.2,0.2 Z"/></svg>
<div style="position:absolute;left:1319px;top:16.53px;font-family:'Liberation Sans', sans-serif;font-size:23px;line-height:23px;color:#2b2b2b;font-weight:400;letter-spacing:0.25px;white-space:pre;">DetailedList…ViewModel</div>
<svg style="position:absolute;left:1677px;top:16px" width="25" height="22" viewBox="0 0 29 26"><path fill="#fa6b3d" d="M18.2,0.2 C23.5,3.5 27.6,8.5 27.3,14.4 C27.2,16 26.9,17.3 26.6,18.2 C27.9,20.2 28.9,23 28.9,25.8 C27.5,24 25,23.3 20.6,24.8 C15,27 7.5,25.5 0.2,16.6 C5.5,20.5 11.5,20.3 15.8,18.2 C11.5,14.5 6.5,9 3.4,4.3 C7.5,8.5 11,11 13.7,12.3 C11,9.5 8.5,6 7.2,2.9 C11.5,7 16,10.5 19.9,13.7 C21.2,9.5 21,4 18.2,0.2 Z"/></svg>
<div style="position:absolute;left:1711px;top:16.53px;font-family:'Liberation Sans', sans-serif;font-size:23px;line-height:23px;color:#1a6fe0;font-weight:400;letter-spacing:0.25px;white-space:pre;">VehicleCou…ndViewModel</div>
<svg style="position:absolute;left:2079px;top:16px" width="25" height="22" viewBox="0 0 29 26"><path fill="#fa6b3d" d="M18.2,0.2 C23.5,3.5 27.6,8.5 27.3,14.4 C27.2,16 26.9,17.3 26.6,18.2 C27.9,20.2 28.9,23 28.9,25.8 C27.5,24 25,23.3 20.6,24.8 C15,27 7.5,25.5 0.2,16.6 C5.5,20.5 11.5,20.3 15.8,18.2 C11.5,14.5 6.5,9 3.4,4.3 C7.5,8.5 11,11 13.7,12.3 C11,9.5 8.5,6 7.2,2.9 C11.5,7 16,10.5 19.9,13.7 C21.2,9.5 21,4 18.2,0.2 Z"/></svg>
<div style="position:absolute;left:2113px;top:16.53px;font-family:'Liberation Sans', sans-serif;font-size:23px;line-height:23px;color:#2b2b2b;font-weight:400;letter-spacing:0.25px;white-space:pre;">VehicleCountByBrand</div>
<div style="position:absolute;left:2380px;top:16px;width:2px;height:24px;background:#e2e2e2;"></div>
<svg style="position:absolute;left:2429px;top:16px" width="25" height="22" viewBox="0 0 29 26"><path fill="#fa6b3d" d="M18.2,0.2 C23.5,3.5 27.6,8.5 27.3,14.4 C27.2,16 26.9,17.3 26.6,18.2 C27.9,20.2 28.9,23 28.9,25.8 C27.5,24 25,23.3 20.6,24.8 C15,27 7.5,25.5 0.2,16.6 C5.5,20.5 11.5,20.3 15.8,18.2 C11.5,14.5 6.5,9 3.4,4.3 C7.5,8.5 11,11 13.7,12.3 C11,9.5 8.5,6 7.2,2.9 C11.5,7 16,10.5 19.9,13.7 C21.2,9.5 21,4 18.2,0.2 Z"/></svg>
<div style="position:absolute;left:2463px;top:16.53px;font-family:'Liberation Sans', sans-serif;font-size:23px;line-height:23px;color:#2b2b2b;font-weight:400;letter-spacing:0.25px;white-space:pre;">Supabase</div>
<div style="position:absolute;left:2606px;top:16px;width:2px;height:24px;background:#e2e2e2;"></div>
<svg style="position:absolute;left:2655px;top:16px" width="25" height="22" viewBox="0 0 29 26"><path fill="#fa6b3d" d="M18.2,0.2 C23.5,3.5 27.6,8.5 27.3,14.4 C27.2,16 26.9,17.3 26.6,18.2 C27.9,20.2 28.9,23 28.9,25.8 C27.5,24 25,23.3 20.6,24.8 C15,27 7.5,25.5 0.2,16.6 C5.5,20.5 11.5,20.3 15.8,18.2 C11.5,14.5 6.5,9 3.4,4.3 C7.5,8.5 11,11 13.7,12.3 C11,9.5 8.5,6 7.2,2.9 C11.5,7 16,10.5 19.9,13.7 C21.2,9.5 21,4 18.2,0.2 Z"/></svg>
<div style="position:absolute;left:2689px;top:16.53px;font-family:'Liberation Sans', sans-serif;font-size:23px;line-height:23px;color:#2b2b2b;font-weight:400;letter-spacing:0.25px;white-space:pre;">Logger</div>
</div>
<div style="position:absolute;left:865px;top:78px;width:2px;height:54px;background:#c4c4c4;"></div>
<div style="position:absolute;left:867px;top:78px;width:10px;height:54px;background:linear-gradient(to left,rgba(0,0,0,0),rgba(0,0,0,0.14))"></div>
<div style="position:absolute;left:3649px;top:78px;width:10px;height:54px;background:linear-gradient(to right,rgba(0,0,0,0),rgba(0,0,0,0.16))"></div>
<div style="position:absolute;left:3658px;top:78px;width:182px;height:54px;background:#fff;"></div>
<div style="position:absolute;left:3657px;top:78px;width:2px;height:54px;background:#c8c8c8;"></div>
<svg style="position:absolute;left:3674px;top:90px" width="28" height="30" viewBox="0 0 28 30"><g stroke="#707070" stroke-width="2.0" fill="none" stroke-linecap="round" stroke-linejoin="round"><path d="M6,8.8 H24.5 M18.5,2.5 L24.8,8.8 L18.5,15.1 M2.5,21 H21 M8.5,14.7 L2.2,21 L8.5,27.3"/></g></svg>
<svg style="position:absolute;left:3720px;top:91px" width="40" height="28" viewBox="0 0 40 28"><g stroke="#707070" stroke-width="1.8" fill="none" stroke-linecap="round" stroke-linejoin="round"><path d="M2,2 H14 M2,7.9 H18 M2,13.8 H14 M2,20 H18 M2,26 H18"/><rect x="22.3" y="2" width="15.6" height="24.6"/><rect x="26.4" y="5.7" width="7.4" height="16.3"/></g></svg>
<div style="position:absolute;left:3776px;top:93px;width:2px;height:24px;background:#e2e2e2;"></div>
<svg style="position:absolute;left:3795px;top:91px" width="28" height="28" viewBox="0 0 28 28"><g stroke="#707070" stroke-width="1.9" fill="none" stroke-linecap="round" stroke-linejoin="round"><rect x="1.5" y="1.5" width="25" height="25" rx="5"/><path d="M1.5,9.8 H26.5 M14,13 V21.5 M9.5,17.8 H18.5"/></g></svg>
<svg style="position:absolute;left:731px;top:147px" width="26" height="26" viewBox="0 0 30 30"><rect x="0" y="0" width="30" height="30" rx="7" fill="#1a7ffa"/><rect x="2.6" y="2.6" width="24.8" height="24.8" rx="5" fill="none" stroke="#c2dcfd" stroke-width="1.3"/><g stroke="#fff" stroke-width="1.906666666666667" stroke-linecap="round" fill="none"><path d="M16.6,7.1 L10.4,17"/><path d="M13.2,7.1 L22.2,22.6"/><path d="M5.8,18.5 H24.5"/><path d="M7.4,22.8 L8.6,21.3"/></g></svg>
<div style="position:absolute;left:769px;top:151.03px;font-family:'Liberation Sans', sans-serif;font-size:23px;line-height:23px;color:#2b2b2b;font-weight:400;letter-spacing:0.15px;white-space:pre;">ElectricRide</div>
<svg style="position:absolute;left:903px;top:150px" width="12" height="22" viewBox="0 0 12 22"><g stroke="#787878" stroke-width="2.3" fill="none" stroke-linecap="round" stroke-linejoin="round"><path d="M4.2,2.3 L8.4,11 L4.2,19.8"/></g></svg>
<svg style="position:absolute;left:930px;top:150px" width="25" height="20" viewBox="0 0 29 24"><path fill="#979ca1" d="M3,0 H8.5 C10,0 10.6,0.6 11.4,1.6 L12,2.3 H26 C27.7,2.3 29,3.6 29,5.3 V6.6 H0 V3 C0,1.3 1.3,0 3,0 Z"/><path fill="#979ca1" d="M0,9.6 H29 V21 C29,22.7 27.7,24 26,24 H3 C1.3,24 0,22.7 0,21 Z"/></svg>
<div style="position:absolute;left:967px;top:151.03px;font-family:'Liberation Sans', sans-serif;font-size:23px;line-height:23px;color:#2b2b2b;font-weight:400;letter-spacing:0.15px;white-space:pre;">ElectricRide</div>
<svg style="position:absolute;left:1100px;top:150px" width="12" height="22" viewBox="0 0 12 22"><g stroke="#787878" stroke-width="2.3" fill="none" stroke-linecap="round" stroke-linejoin="round"><path d="M4.2,2.3 L8.4,11 L4.2,19.8"/></g></svg>
<svg style="position:absolute;left:1128px;top:150px" width="25" height="20" viewBox="0 0 29 24"><path fill="#979ca1" d="M3,0 H8.5 C10,0 10.6,0.6 11.4,1.6 L12,2.3 H26 C27.7,2.3 29,3.6 29,5.3 V6.6 H0 V3 C0,1.3 1.3,0 3,0 Z"/><path fill="#979ca1" d="M0,9.6 H29 V21 C29,22.7 27.7,24 26,24 H3 C1.3,24 0,22.7 0,21 Z"/></svg>
<div style="position:absolute;left:1165px;top:151.03px;font-family:'Liberation Sans', sans-serif;font-size:23px;line-height:23px;color:#2b2b2b;font-weight:400;letter-spacing:0.15px;white-space:pre;">ViewModels</div>
<svg style="position:absolute;left:1301px;top:150px" width="12" height="22" viewBox="0 0 12 22"><g stroke="#787878" stroke-width="2.3" fill="none" stroke-linecap="round" stroke-linejoin="round"><path d="M4.2,2.3 L8.4,11 L4.2,19.8"/></g></svg>
<svg style="position:absolute;left:1328px;top:149px" width="24" height="22" viewBox="0 0 29 26"><path fill="#fa6b3d" d="M18.2,0.2 C23.5,3.5 27.6,8.5 27.3,14.4 C27.2,16 26.9,17.3 26.6,18.2 C27.9,20.2 28.9,23 28.9,25.8 C27.5,24 25,23.3 20.6,24.8 C15,27 7.5,25.5 0.2,16.6 C5.5,20.5 11.5,20.3 15.8,18.2 C11.5,14.5 6.5,9 3.4,4.3 C7.5,8.5 11,11 13.7,12.3 C11,9.5 8.5,6 7.2,2.9 C11.5,7 16,10.5 19.9,13.7 C21.2,9.5 21,4 18.2,0.2 Z"/></svg>
<div style="position:absolute;left:1365px;top:151.03px;font-family:'Liberation Sans', sans-serif;font-size:23px;line-height:23px;color:#2b2b2b;font-weight:400;letter-spacing:0.15px;white-space:pre;">VehicleCountByBrandViewModel</div>
<svg style="position:absolute;left:1716px;top:150px" width="12" height="22" viewBox="0 0 12 22"><g stroke="#787878" stroke-width="2.3" fill="none" stroke-linecap="round" stroke-linejoin="round"><path d="M4.2,2.3 L8.4,11 L4.2,19.8"/></g></svg>
<div style="position:absolute;left:1740px;top:144px;width:32px;height:32px;border-radius:7px;background:#ca50db"></div>
<div style="position:absolute;left:1748.5px;top:149.88px;font-family:'Liberation Sans', sans-serif;font-size:22px;line-height:22px;color:#ffffff;font-weight:700;letter-spacing:0px;white-space:pre;">C</div>
<div style="position:absolute;left:1781px;top:151.03px;font-family:'Liberation Sans', sans-serif;font-size:23px;line-height:23px;color:#2b2b2b;font-weight:400;letter-spacing:0.15px;white-space:pre;">VehicleCountByBrandViewModel</div>
<div style="position:absolute;left:714px;top:190px;width:3126px;height:1864px;overflow:hidden">
<div style="position:absolute;left:-714px;top:-190px;width:3840px;height:2110px">
<div style="position:absolute;left:714px;top:482px;width:3096px;height:40px;background:#e8f2ff;"></div>
<div style="position:absolute;left:812px;top:44px;width:14px;height:236px;background:#e6e6e6;border-radius:7px;box-shadow:0 0 0 1px #fff"></div>
<div style="position:absolute;left:812px;top:484px;width:14px;height:1556px;background:#e8e8e8;border-radius:7px;box-shadow:0 0 0 1px #fff"></div>
<div style="position:absolute;left:812px;top:724px;width:14px;height:276px;background:#d9d9d9;border-radius:7px;box-shadow:0 0 0 1px #fff"></div>
<div style="position:absolute;left:812px;top:1084px;width:14px;height:876px;background:#d9d9d9;border-radius:7px;box-shadow:0 0 0 1px #fff"></div>
<div style="position:absolute;left:812px;top:844px;width:14px;height:116px;background:#c8c8c8;border-radius:7px;box-shadow:0 0 0 1px #fff"></div>
<div style="position:absolute;left:812px;top:1244px;width:14px;height:516px;background:#c8c8c8;border-radius:7px;box-shadow:0 0 0 1px #fff"></div>
<div style="position:absolute;left:812px;top:1724px;width:14px;height:156px;background:#c8c8c8;border-radius:7px;box-shadow:0 0 0 1px #fff"></div>
<div style="position:absolute;left:812px;top:484px;width:14px;height:38px;background:#d3dbe6;border-radius:7px 7px 0 0"></div>
<div style="position:absolute;left:724px;top:150px;width:10px;height:1892px;border-radius:0 0 5px 5px;background:#9ecaff;box-shadow:inset 0 0 0 2px #0077ff"></div>
<div class="code" style="top:164px"><span class="c">//</span></div>
<div class="ln" style="top:165px;color:#a6a6a6">4</div>
<div class="code" style="top:204px"><span class="c">//  Created by Russell Gordon on 2025-05-31.</span></div>
<div class="ln" style="top:205px;color:#a6a6a6">5</div>
<div class="code" style="top:244px"><span class="c">//</span></div>
<div class="ln" style="top:245px;color:#a6a6a6">6</div>
<div class="code" style="top:284px"></div>
<div class="ln" style="top:285px;color:#a6a6a6">7</div>
<div class="code" style="top:324px"><span class="k">import</span><span class="p"> Foundation</span></div>
<div class="ln" style="top:325px;color:#a6a6a6">8</div>
<div class="code" style="top:364px"><span class="k">import</span><span class="p"> OSLog</span></div>
<div class="ln" style="top:365px;color:#a6a6a6">9</div>
<div class="code" style="top:404px"></div>
<div class="ln" style="top:405px;color:#a6a6a6">10</div>
<div class="code" style="top:444px"><span class="p">@Observable </span><span class="oc">@MainActor</span></div>
<div class="ln" style="top:445px;color:#a6a6a6">11</div>
<div class="code" style="top:484px"><span class="k">class</span><span class="p"> </span><span class="td">VehicleCountByBrandViewModel</span><span class="p">: Observable {</span></div>
<div class="ln" style="top:485px;color:#1a1a1a">12</div>
<div class="code" style="top:524px"></div>
<div class="ln" style="top:525px;color:#a6a6a6">13</div>
<div class="code" style="top:564px"><span class="p">    </span><span class="c">// </span><span class="m">MARK: Stored properties</span></div>
<div class="ln" style="top:565px;color:#a6a6a6">14</div>
<div class="code" style="top:604px"><span class="p">    </span><span class="k">var</span><span class="p"> </span><span class="od">countsByBrand</span><span class="p">: [</span><span class="pc">VehicleCountByBrand</span><span class="p">] = []</span></div>
<div class="ln" style="top:605px;color:#a6a6a6">15</div>
<div class="code" style="top:644px"></div>
<div class="ln" style="top:645px;color:#a6a6a6">16</div>
<div class="code" style="top:684px"><span class="p">    </span><span class="c">// </span><span class="m">MARK: Initializer(s)</span></div>
<div class="ln" style="top:685px;color:#a6a6a6">17</div>
<div class="code" style="top:724px"><span class="p">    </span><span class="k">init</span><span class="p">() {</span></div>
<div class="ln" style="top:725px;color:#a6a6a6">18</div>
<div class="code" style="top:764px"></div>
<div class="ln" style="top:765px;color:#a6a6a6">19</div>
<div class="code" style="top:804px"><span class="p">        </span><span class="c">// Get counts by brand from database</span></div>
<div class="ln" style="top:805px;color:#a6a6a6">20</div>
<div class="code" style="top:844px"><span class="p">        </span><span class="oc">Task</span><span class="p"> {</span></div>
<div class="ln" style="top:845px;color:#a6a6a6">21</div>
<div class="code" style="top:884px"><span class="p">            </span><span class="k">try</span><span class="p"> </span><span class="k">await</span><span class="p"> </span><span class="pf">getCounts</span><span class="p">()</span></div>
<div class="ln" style="top:885px;color:#a6a6a6">22</div>
<div class="code" style="top:924px"><span class="p">        }</span></div>
<div class="ln" style="top:925px;color:#a6a6a6">23</div>
<div class="code" style="top:964px"><span class="p">    }</span></div>
<div class="ln" style="top:965px;color:#a6a6a6">24</div>
<div class="code" style="top:1004px"></div>
<div class="ln" style="top:1005px;color:#a6a6a6">25</div>
<div class="code" style="top:1044px"><span class="p">    </span><span class="c">// </span><span class="m">MARK: Function(s)</span></div>
<div class="ln" style="top:1045px;color:#a6a6a6">26</div>
<div class="code" style="top:1084px"><span class="p">    </span><span class="k">func</span><span class="p"> </span><span class="od">getCounts</span><span class="p">() </span><span class="k">async</span><span class="p"> </span><span class="k">throws</span><span class="p"> {</span></div>
<div class="ln" style="top:1085px;color:#a6a6a6">27</div>
<div class="code" style="top:1124px"></div>
<div class="ln" style="top:1125px;color:#a6a6a6">28</div>
<div class="code" style="top:1164px"><span class="p">        </span><span class="oc">Logger</span><span class="p">.</span><span class="pf">database</span><span class="p">.</span><span class="of">info</span><span class="p">(</span><span class="s">&quot;VehicleCountByBrandViewModel: About to try loading count of vehicles available by brand.&quot;</span><span class="p">)</span></div>
<div class="ln" style="top:1165px;color:#a6a6a6">29</div>
<div class="code" style="top:1204px"></div>
<div class="ln" style="top:1205px;color:#a6a6a6">30</div>
<div class="code" style="top:1244px"><span class="p">        </span><span class="k">do</span><span class="p"> {</span></div>
<div class="ln" style="top:1245px;color:#a6a6a6">31</div>
<div class="code" style="top:1284px"></div>
<div class="ln" style="top:1285px;color:#a6a6a6">32</div>
<div class="code" style="top:1324px"><span class="p">            </span><span class="k">let</span><span class="p"> results: [</span><span class="pc">VehicleCountByBrand</span><span class="p">] = </span><span class="k">try</span><span class="p"> </span><span class="k">await</span><span class="p"> </span><span class="pf">supabase</span></div>
<div class="ln" style="top:1325px;color:#a6a6a6">33</div>
<div class="code" style="top:1364px"><span class="p">                .from(</span><span class="s">&quot;count_of_vehicles_by_brand&quot;</span><span class="p">)</span></div>
<div class="ln" style="top:1365px;color:#a6a6a6">34</div>
<div class="code" style="top:1404px"><span class="p">                .</span><span class="of">select</span><span class="p">()</span></div>
<div class="ln" style="top:1405px;color:#a6a6a6">35</div>
<div class="code" style="top:1444px"><span class="p">                .execute()</span></div>
<div class="ln" style="top:1445px;color:#a6a6a6">36</div>
<div class="code" style="top:1484px"><span class="p">                .</span><span class="of">value</span></div>
<div class="ln" style="top:1485px;color:#a6a6a6">37</div>
<div class="code" style="top:1524px"></div>
<div class="ln" style="top:1525px;color:#a6a6a6">38</div>
<div class="code" style="top:1564px"><span class="p">            </span><span class="oc">Logger</span><span class="p">.</span><span class="pf">database</span><span class="p">.</span><span class="of">info</span><span class="p">(</span><span class="s">&quot;VehicleCountByBrandViewModel: Vehicle counts by brand retrieved; about to assign results to `countsByBrand` array.&quot;</span><span class="p">)</span></div>
<div class="ln" style="top:1565px;color:#a6a6a6">39</div>
<div class="code" style="top:1604px"></div>
<div class="ln" style="top:1605px;color:#a6a6a6">40</div>
<div class="code" style="top:1644px"><span class="p">            </span><span class="k">self</span><span class="p">.</span><span class="pf">countsByBrand</span><span class="p"> = results</span></div>
<div class="ln" style="top:1645px;color:#a6a6a6">41</div>
<div class="code" style="top:1684px"></div>
<div class="ln" style="top:1685px;color:#a6a6a6">42</div>
<div class="code" style="top:1724px"><span class="p">        } </span><span class="k">catch</span><span class="p"> {</span></div>
<div class="ln" style="top:1725px;color:#a6a6a6">43</div>
<div class="code" style="top:1764px"><span class="p">            </span><span class="oc">Logger</span><span class="p">.</span><span class="pf">database</span><span class="p">.</span><span class="of">error</span><span class="p">(</span><span class="s">&quot;VehicleCountByBrandViewModel: Could not load vehicle counts by brand.&quot;</span><span class="p">)</span></div>
<div class="ln" style="top:1765px;color:#a6a6a6">44</div>
<div class="code" style="top:1804px"><span class="p">            </span><span class="oc">Logger</span><span class="p">.</span><span class="pf">database</span><span class="p">.</span><span class="of">error</span><span class="p">(</span><span class="s">&quot;</span><span class="p">\(error)</span><span class="s">&quot;</span><span class="p">)</span></div>
<div class="ln" style="top:1805px;color:#a6a6a6">45</div>
<div class="code" style="top:1844px"><span class="p">        }</span></div>
<div class="ln" style="top:1845px;color:#a6a6a6">46</div>
<div class="code" style="top:1884px"></div>
<div class="ln" style="top:1885px;color:#a6a6a6">47</div>
<div class="code" style="top:1924px"><span class="p">    }</span></div>
<div class="ln" style="top:1925px;color:#a6a6a6">48</div>
<div class="code" style="top:1964px"></div>
<div class="ln" style="top:1965px;color:#a6a6a6">49</div>
<div class="code" style="top:2004px"><span class="p">}</span></div>
<div class="ln" style="top:2005px;color:#a6a6a6">50</div>
<div class="code" style="top:2044px"></div>
<div class="ln" style="top:2045px;color:#a6a6a6">51</div>
</div></div>
<div style="position:absolute;left:3810px;top:190px;width:30px;height:1863px;background:#fafafa;"></div>
<div style="position:absolute;left:3810px;top:190px;width:2px;height:1863px;background:#e8e8e8;"></div>
<div style="position:absolute;left:3818px;top:282px;width:16px;height:1211px;background:#7f7f7f;border-radius:8px"></div>
<div style="position:absolute;left:3838px;top:190px;width:2px;height:1863px;background:#ececec;"></div>
<svg style="position:absolute;left:737px;top:2074px" width="30" height="18" viewBox="0 0 30 18"><path d="M3,0 H23.5 Q25.5,0 26.6,1.6 L29.6,7.6 Q30.3,9 29.6,10.4 L26.6,16.4 Q25.5,18 23.5,18 H3 Q0,18 0,15 V3 Q0,0 3,0 Z" fill="#0a78ff"/></svg>
<div style="position:absolute;left:782px;top:2071px;width:2px;height:24px;background:#e2e2e2;"></div>
<svg style="position:absolute;left:803px;top:2068px" width="22" height="30" viewBox="0 0 22 30"><g stroke="#707070" stroke-width="1.8" fill="none" stroke-linecap="round" stroke-linejoin="round"><rect x="2.3" y="2" width="5.2" height="25.5" rx="2.2"/><rect x="14.4" y="2" width="5.2" height="25.5" rx="2.2"/></g></svg>
<svg style="position:absolute;left:859px;top:2068px" width="30" height="30" viewBox="0 0 30 30"><g stroke="#bdbdbd" stroke-width="1.7" fill="none" stroke-linecap="round" stroke-linejoin="round"><path d="M2.2,19.5 L15,6.4 L27.3,19.2 M19.3,19.2 H27.3 V11.5"/><rect x="6.3" y="22.5" width="17.2" height="5"/></g></svg>
<svg style="position:absolute;left:922px;top:2068px" width="22" height="30" viewBox="0 0 22 30"><g stroke="#bdbdbd" stroke-width="1.7" fill="none" stroke-linecap="round" stroke-linejoin="round"><path d="M12,2 V19.8 M5.2,12.7 L12,19.8 L18.8,12.7"/><rect x="3.3" y="22.5" width="17.3" height="5"/></g></svg>
<svg style="position:absolute;left:982px;top:2068px" width="22" height="30" viewBox="0 0 22 30"><g stroke="#bdbdbd" stroke-width="1.7" fill="none" stroke-linecap="round" stroke-linejoin="round"><path d="M12,3 V19.8 M5.3,9.5 L12,2.7 L18.6,9.5"/><rect x="3.2" y="22.5" width="17.4" height="5"/></g></svg>
<div style="position:absolute;left:1024px;top:2071px;width:2px;height:24px;background:#e2e2e2;"></div>
<svg style="position:absolute;left:1043px;top:2069px" width="28" height="28" viewBox="0 0 28 28"><g stroke="#707070" stroke-width="1.7" fill="none" stroke-linecap="round" stroke-linejoin="round"><rect x="1.8" y="1.8" width="23.8" height="6" rx="2.2"/><rect x="1.8" y="10.9" width="23.8" height="6" rx="2.2"/><rect x="1.8" y="19.4" width="23.8" height="6" rx="2.2"/></g></svg>
<svg style="position:absolute;left:1103px;top:2068px" width="26" height="30" viewBox="0 0 26 30"><g stroke="#707070" stroke-width="1.8" fill="none" stroke-linecap="round" stroke-linejoin="round"><path d="M11,28 V14 L23.4,7.7 V22.9 Z"/><path d="M6.8,25.2 V10.6 L19.6,5"/><path d="M2.7,22.9 V8.3 L15.5,2.5"/></g></svg>
<svg style="position:absolute;left:1161px;top:2067px" width="30" height="32" viewBox="0 0 30 32"><g stroke="#707070" stroke-width="1.8" fill="none" stroke-linecap="round" stroke-linejoin="round"><circle cx="7" cy="7.9" r="4.3"/><circle cx="7" cy="23.9" r="4.3"/><circle cx="23" cy="15.7" r="4.3"/><path d="M10.8,9.9 L19.2,13.8 M10.8,21.9 L19.2,17.6"/></g></svg>
<svg style="position:absolute;left:1223px;top:2068px" width="26" height="30" viewBox="0 0 26 30"><g stroke="#707070" stroke-width="1.8" fill="none" stroke-linecap="round" stroke-linejoin="round"><rect x="2.4" y="2.5" width="21.2" height="10.5" rx="5.25"/><rect x="2.4" y="16.5" width="21.2" height="11" rx="5.5"/><circle cx="8.2" cy="7.7" r="2.6" fill="#707070" stroke="none"/><circle cx="18.2" cy="22" r="2.6" fill="#707070" stroke="none"/></g></svg>
<svg style="position:absolute;left:1282px;top:2068px" width="30" height="30" viewBox="0 0 30 30"><g stroke="#707070" stroke-width="1.9" fill="none" stroke-linecap="round" stroke-linejoin="round"><path d="M26.7,2.5 L2,12.7 L15,13.2 L15.8,26.7 Z"/></g></svg>
<div style="position:absolute;left:1326px;top:2071px;width:2px;height:24px;background:#e2e2e2;"></div>
<svg style="position:absolute;left:1346px;top:2071px" width="23" height="23" viewBox="0 0 30 30"><rect x="0" y="0" width="30" height="30" rx="5" fill="#767676"/><g stroke="#fff" stroke-width="1.686666666666667" stroke-linecap="round" fill="none"><path d="M16.6,7.1 L10.4,17"/><path d="M13.2,7.1 L22.2,22.6"/><path d="M5.8,18.5 H24.5"/><path d="M7.4,22.8 L8.6,21.3"/></g></svg>
<div style="position:absolute;left:1383px;top:2072.53px;font-family:'Liberation Sans', sans-serif;font-size:23px;line-height:23px;color:#262626;font-weight:400;letter-spacing:0.1px;white-space:pre;">ElectricRide</div>
<div style="position:absolute;left:3577px;top:2072.53px;font-family:'Liberation Sans', sans-serif;font-size:23px;line-height:23px;color:#7a7a7a;font-weight:400;letter-spacing:0.35px;white-space:pre;-webkit-text-stroke:0.45px #7a7a7a">Line: 12  Col: 11</div>
<div style="position:absolute;left:3770px;top:2071px;width:2px;height:24px;background:#e4e4e4;"></div>
<svg style="position:absolute;left:3788px;top:2069px" width="28" height="28" viewBox="0 0 28 28"><g stroke="#707070" stroke-width="2" fill="none" stroke-linecap="round" stroke-linejoin="round"><rect x="1.5" y="1.5" width="25" height="25" rx="5"/><rect x="4.5" y="16" width="19" height="6.5" rx="1.5" fill="#707070" stroke="none"/></g></svg>
</div></body></html>
